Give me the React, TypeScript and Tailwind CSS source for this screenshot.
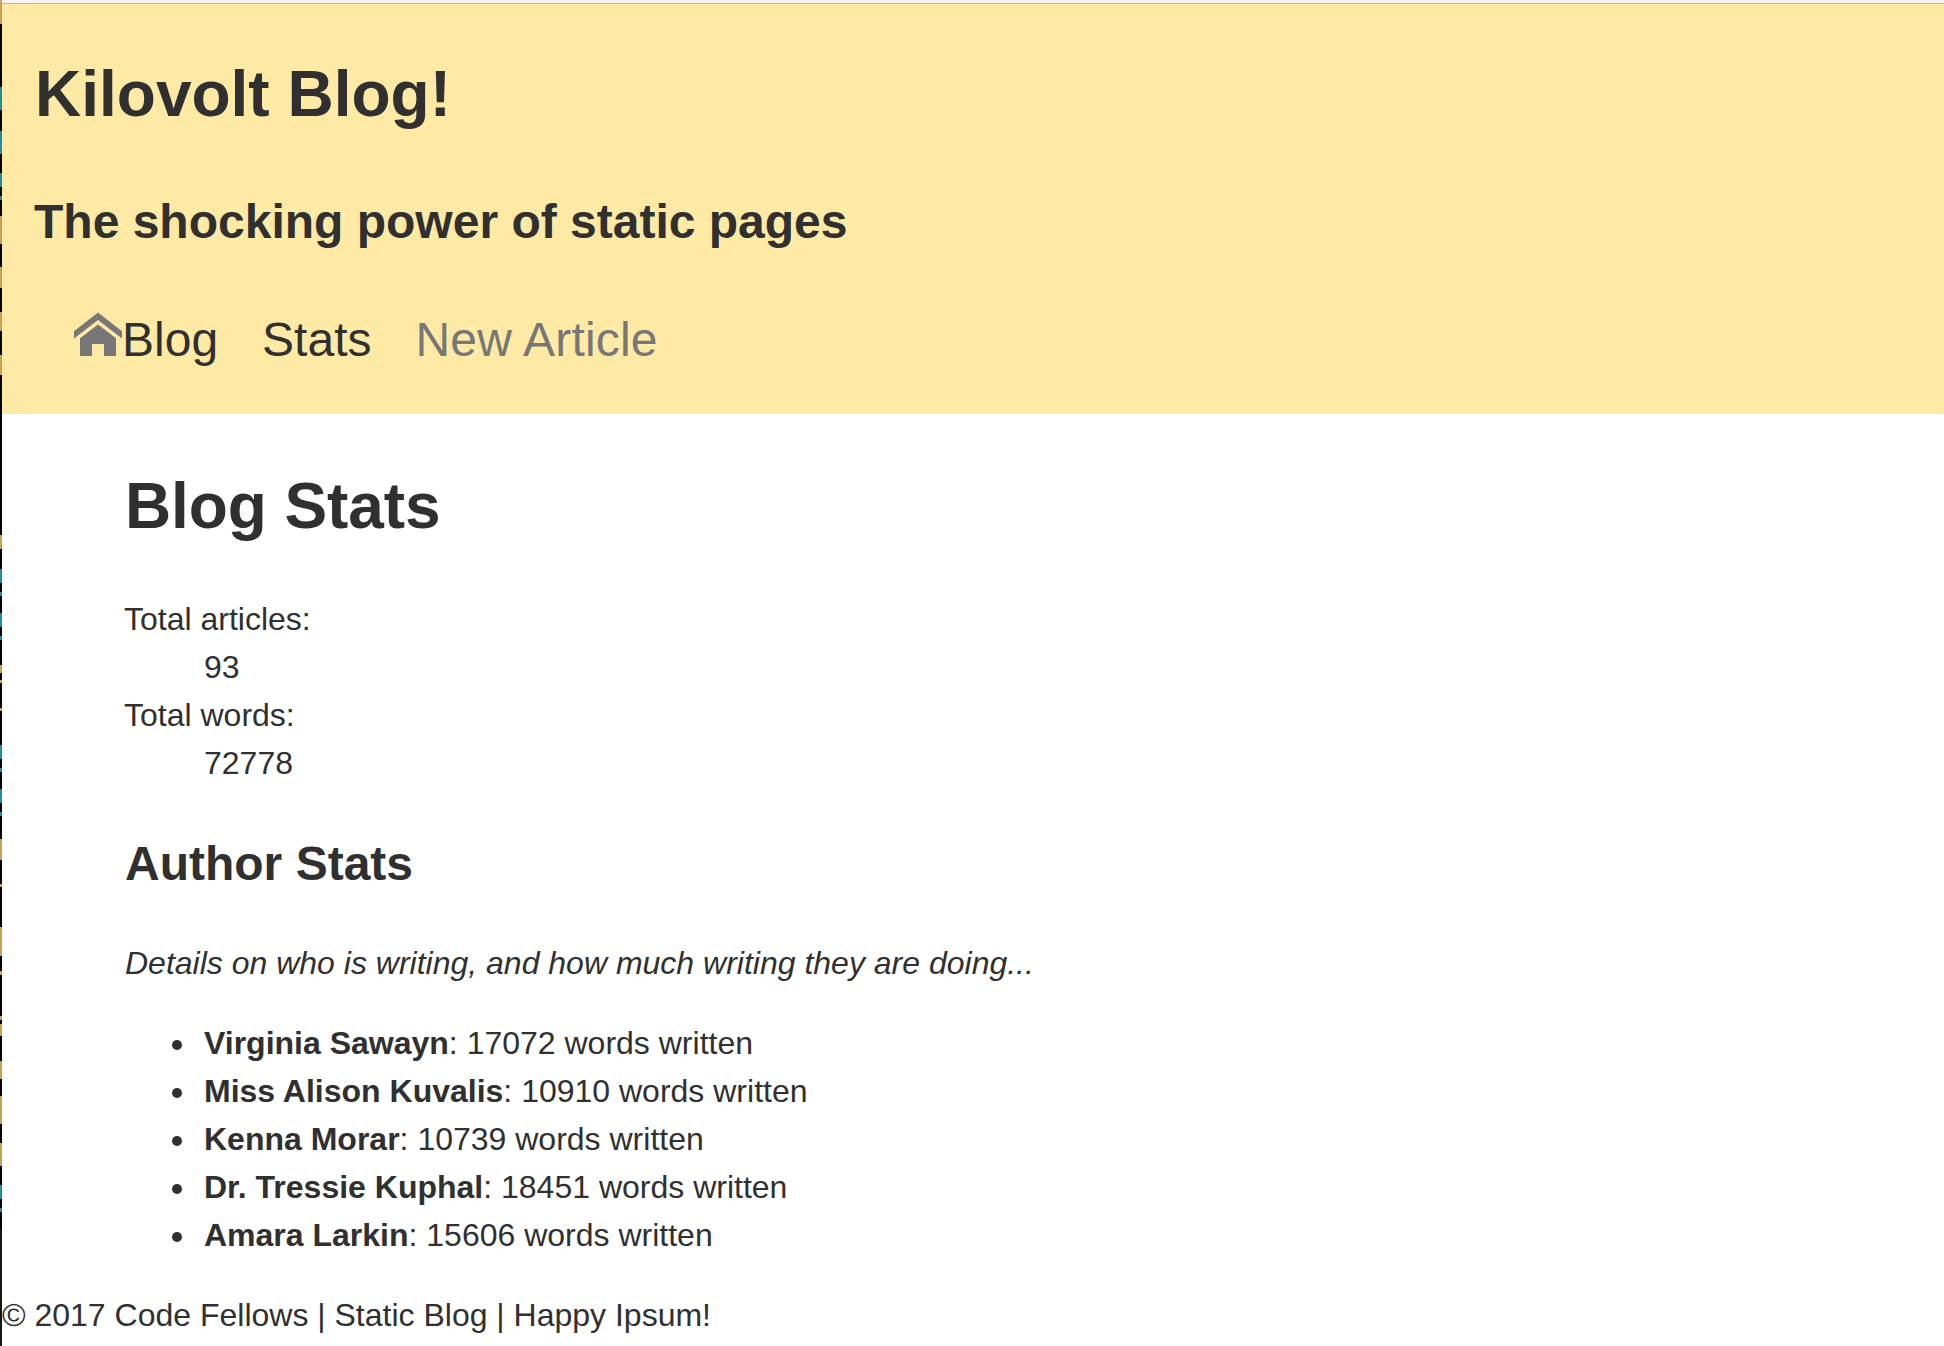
const authors = [
  { name: 'Virginia Sawayn', words: 17072 },
  { name: 'Miss Alison Kuvalis', words: 10910 },
  { name: 'Kenna Morar', words: 10739 },
  { name: 'Dr. Tressie Kuphal', words: 18451 },
  { name: 'Amara Larkin', words: 15606 },
];

const gold = '#c9a154';
const teal = '#218d9c';

// Marks showing in the narrow sliver left of the page: [top, height, colour]
const marks: [number, number, string][] = [
  [0, 24, gold], [87, 23, teal], [131, 23, teal], [173, 14, teal], [196, 4, teal],
  [216, 28, gold], [267, 21, gold], [312, 19, gold], [355, 20, gold], [535, 14, gold],
  [569, 14, teal], [592, 4, teal], [613, 14, teal], [636, 4, teal], [665, 8, gold],
  [680, 3, gold], [708, 3, gold], [745, 14, teal], [768, 4, teal], [789, 14, teal],
  [812, 4, teal], [839, 21, gold], [884, 3, gold], [927, 29, gold], [971, 4, gold],
  [1016, 4, gold], [1024, 12, gold], [1061, 18, gold], [1096, 28, gold], [1143, 23, gold],
  [1185, 14, teal], [1208, 4, teal],
];

function Edge() {
  return (
    <div className="relative w-[2px] shrink-0 bg-black">
      {marks.map(([top, height, color]) => (
        <span key={top} className="absolute left-0 w-[2px]" style={{ top, height, backgroundColor: color }} />
      ))}
      <span className="absolute bottom-0 left-0 h-[117px] w-[2px] bg-[#161616]" />
    </div>
  );
}

function HomeIcon() {
  return (
    <svg viewBox="0 0 48 48" className="mt-[-7px] size-12 shrink-0 fill-[#777777]" aria-hidden="true">
      <path d="M24 3.6 0 22.3v7.3l24-18.5 24 18.5v-7.3z" />
      <path d="M24 15.6 6 29.3V47h12V35h12v12h12V29.3z" />
    </svg>
  );
}

export default function App() {
  return (
    <div className="flex h-[1346px] w-full overflow-hidden bg-white font-['Liberation_Sans',Arial,sans-serif] text-[32px] leading-[48px] text-[#303030]">
      <Edge />
      <div className="flex min-w-0 flex-1 flex-col">
        <div className="h-1 shrink-0 border-b border-[#b4b4b4] bg-[#f5f5f5]" />
        <header className="h-[410px] shrink-0 bg-[#ffeaa5] px-8 pt-[58px]">
          <h1 className="pl-px text-[64px] leading-[64px] font-bold">Kilovolt Blog!</h1>
          <h2 className="mt-[72px] text-[48px] leading-[48px] font-bold">The shocking power of static pages</h2>
          <nav className="mt-[70px] ml-10 flex text-[48px] leading-[48px]">
            <a className="mr-[44px] flex"><HomeIcon />Blog</a>
            <a className="mr-[44px]">Stats</a>
            <a className="tracking-[0.2px] text-[#777777]">New Article</a>
          </nav>
        </header>
        <main className="pt-[60px] pl-[122px]">
          <h1 className="pl-px text-[64px] leading-[64px] font-bold tracking-[-0.1px]">Blog Stats</h1>
          <dl className="mt-[57px]">
            <dt>Total articles:</dt>
            <dd className="ml-20">93</dd>
            <dt>Total words:</dt>
            <dd className="ml-20">72778</dd>
          </dl>
          <h2 className="mt-[53px] pl-px text-[48px] leading-[48px] font-bold">Author Stats</h2>
          <p className="mt-[51px] pl-px italic">Details on who is writing, and how much writing they are doing...</p>
          <ul className="mt-8">
            {authors.map((a) => (
              <li key={a.name} className="flex items-center">
                <span className="mt-1 mr-[22px] ml-12 size-[10px] rounded-full bg-[#303030]" />
                <span><b>{a.name}</b>: {a.words} words written</span>
              </li>
            ))}
          </ul>
        </main>
        <footer className="mt-8">© 2017 Code Fellows | Static Blog | Happy Ipsum!</footer>
      </div>
    </div>
  );
}
